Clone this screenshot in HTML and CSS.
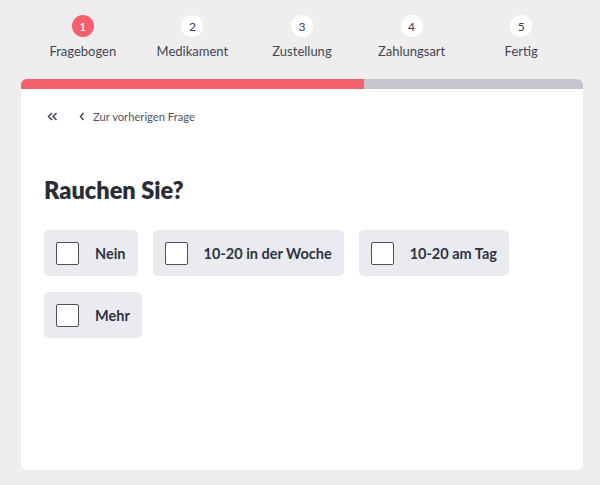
FILE: index.html
```html
<!DOCTYPE html>
<html lang="de">
<head>
<meta charset="utf-8">
<link rel="stylesheet" href="styles.css">
</head>
<body>
<div class="page">
  <ol class="steps">
    <li class="step active"><span class="num">1</span><span class="label">Fragebogen</span></li>
    <li class="step"><span class="num">2</span><span class="label">Medikament</span></li>
    <li class="step"><span class="num">3</span><span class="label">Zustellung</span></li>
    <li class="step"><span class="num">4</span><span class="label">Zahlungsart</span></li>
    <li class="step"><span class="num">5</span><span class="label">Fertig</span></li>
  </ol>
  <div class="card">
    <div class="progress"><div class="progress-fill"></div></div>
    <div class="content">
      <div class="nav">
        <span class="first" aria-label="Zum Anfang">
          <svg width="11" height="9" viewBox="0 0 11 9"><path d="M5 1 L1.5 4.5 L5 8 M9.5 1 L6 4.5 L9.5 8" fill="none" stroke="#454a57" stroke-width="1.5"/></svg>
        </span>
        <span class="prev">
          <svg width="6" height="9" viewBox="0 0 6 9"><path d="M4.5 1 L1.5 4.5 L4.5 8" fill="none" stroke="#454a57" stroke-width="1.5"/></svg>
          <span>Zur vorherigen Frage</span>
        </span>
      </div>
      <h1 class="question">Rauchen Sie?</h1>
      <div class="options">
        <label class="option"><span class="box"></span><span class="opt-text">Nein</span></label>
        <label class="option"><span class="box"></span><span class="opt-text">10-20 in der Woche</span></label>
        <label class="option"><span class="box"></span><span class="opt-text">10-20 am Tag</span></label>
        <label class="option"><span class="box"></span><span class="opt-text">Mehr</span></label>
      </div>
    </div>
  </div>
</div>
</body>
</html>
```

FILE: styles.css
```css
* { box-sizing: border-box; }
html, body { margin: 0; padding: 0; }
body {
  background: #efedee;
  font-family: "Lato", "Noto Sans", sans-serif;
  color: #2d303b;
}
.page {
  padding: 15px 17px 15px 21px;
}
.steps {
  list-style: none;
  margin: 0;
  padding: 0 7px;
  display: grid;
  grid-template-columns: repeat(5, 1fr);
  height: 64px;
}
.step {
  display: flex;
  flex-direction: column;
  align-items: center;
}
.num {
  width: 22px;
  height: 22px;
  border-radius: 50%;
  background: #ffffff;
  color: #3a3e4a;
  font-size: 12px;
  display: flex;
  align-items: center;
  justify-content: center;
}
.step.active .num {
  background: #f4606c;
  color: #ffffff;
}
.label {
  margin-top: 6px;
  font-size: 13px;
  color: #424654;
}
.card {
  background: #ffffff;
  border-radius: 6px;
  overflow: hidden;
  height: 391px;
}
.progress {
  height: 10px;
  background: #c5c6d1;
}
.progress-fill {
  width: 343px;
  height: 100%;
  background: #f4606c;
}
.content {
  padding: 20px 23px;
}
.nav {
  display: flex;
  align-items: center;
  height: 14px;
  padding-left: 3px;
  font-size: 11.2px;
  color: #4f5461;
}
.first { display: flex; align-items: center; }
.prev {
  display: flex;
  align-items: center;
  gap: 8px;
  margin-left: 21px;
}
.question {
  margin: 53px 0 0;
  font-size: 23.5px;
  font-weight: 800;
  line-height: 28px;
  color: #2b2d36;
}
.options {
  display: flex;
  flex-wrap: wrap;
  gap: 16px 15px;
  margin-top: 26px;
}
.option {
  display: flex;
  align-items: center;
  height: 46px;
  padding: 0 12px;
  background: #e9ebf0;
  border-radius: 5px;
}
.box {
  width: 23px;
  height: 23px;
  border: 1.5px solid #4d505a;
  border-radius: 2px;
  background: #ffffff;
}
.opt-text {
  margin-left: 16px;
  font-size: 14.5px;
  font-weight: 700;
  color: #2f3340;
}
```
